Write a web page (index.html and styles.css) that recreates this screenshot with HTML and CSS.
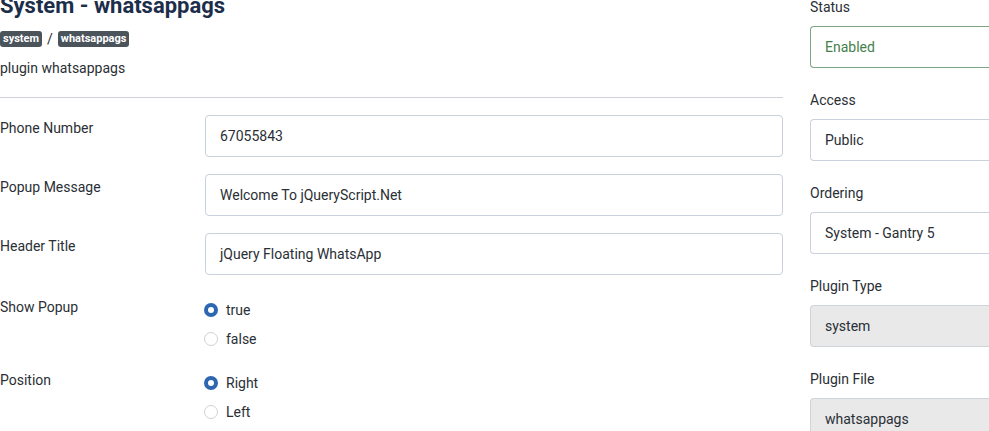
FILE: index.html
```html
<!DOCTYPE html>
<html lang="en">
<head>
<meta charset="utf-8">
<title>System - whatsappags</title>
<link rel="stylesheet" href="styles.css">
</head>
<body>
<div class="page">
  <main class="main">
    <h1 class="title">System - whatsappags</h1>
    <div class="badges">
      <span class="badge">system</span>
      <span class="sep">/</span>
      <span class="badge">whatsappags</span>
    </div>
    <p class="desc">plugin whatsappags</p>
    <hr class="rule">
    <div class="rows">
      <div class="row">
        <div class="label">Phone Number</div>
        <div class="input">67055843</div>
      </div>
      <div class="row">
        <div class="label">Popup Message</div>
        <div class="input">Welcome To jQueryScript.Net</div>
      </div>
      <div class="row">
        <div class="label">Header Title</div>
        <div class="input">jQuery Floating WhatsApp</div>
      </div>
      <div class="row row-radio">
        <div class="label">Show Popup</div>
        <div class="radios">
          <div class="radio"><span class="dot checked"></span>true</div>
          <div class="radio"><span class="dot"></span>false</div>
        </div>
      </div>
      <div class="row row-radio row-last">
        <div class="label">Position</div>
        <div class="radios">
          <div class="radio"><span class="dot checked"></span>Right</div>
          <div class="radio"><span class="dot"></span>Left</div>
        </div>
      </div>
    </div>
  </main>
  <aside class="side">
    <div class="group">
      <div class="side-label">Status</div>
      <div class="input success">Enabled</div>
    </div>
    <div class="group">
      <div class="side-label">Access</div>
      <div class="input">Public</div>
    </div>
    <div class="group">
      <div class="side-label">Ordering</div>
      <div class="input">System - Gantry 5</div>
    </div>
    <div class="group">
      <div class="side-label">Plugin Type</div>
      <div class="input disabled">system</div>
    </div>
    <div class="group">
      <div class="side-label">Plugin File</div>
      <div class="input disabled">whatsappags</div>
    </div>
  </aside>
</div>
</body>
</html>
```
FILE: styles.css
```css
html, body {
  margin: 0;
  padding: 0;
  background: #ffffff;
  overflow: hidden;
}
body {
  font-family: Roboto, "Liberation Sans", sans-serif;
  font-size: 14px;
  color: #2a2f35;
}
.page {
  display: flex;
  gap: 27px;
  width: 1040px;
}
.main {
  width: 783px;
  flex: none;
}
.title {
  margin: -7px 0 0;
  font-size: 22px;
  line-height: 26px;
  font-weight: 700;
  color: #1c2e4a;
}
.badges {
  margin-top: 11px;
  display: flex;
  align-items: center;
  gap: 5px;
  height: 17px;
}
.badge {
  background: #4b535b;
  color: #ffffff;
  font-size: 11px;
  font-weight: 700;
  line-height: 16px;
  padding: 0 3px;
  border-radius: 3px;
}
.sep {
  color: #2a2f35;
  font-size: 14px;
}
.desc {
  margin: 11px 0 0;
  line-height: 20px;
}
.rule {
  margin: 19px 0 0;
  border: 0;
  border-top: 1px solid #cfd2d6;
  height: 0;
}
.rows {
  margin-top: 17px;
  display: flex;
  flex-direction: column;
}
.row {
  display: flex;
  margin-bottom: 17px;
}
.row-radio {
  margin-bottom: 12px;
}
.label {
  width: 205px;
  flex: none;
  line-height: 20px;
  padding-top: 3px;
}
.row-radio .label {
  padding-top: 5px;
}
.input {
  flex: 1;
  height: 42px;
  box-sizing: border-box;
  border: 1px solid #c9d1dc;
  border-radius: 4px;
  padding: 0 14px;
  display: flex;
  align-items: center;
  color: #2a2f35;
  background: #ffffff;
}
.radios {
  display: flex;
  flex-direction: column;
  padding-top: 3px;
}
.radio {
  height: 29px;
  display: flex;
  align-items: center;
  gap: 8px;
}
.dot {
  width: 14px;
  height: 14px;
  box-sizing: border-box;
  border: 1px solid #cfd2d5;
  border-radius: 50%;
  background: #ffffff;
  margin-left: -1px;
}
.dot.checked {
  border: 4px solid #2d67b2;
}
.side {
  width: 220px;
  flex: none;
  margin-top: -3px;
  display: flex;
  flex-direction: column;
}
.group {
  display: flex;
  flex-direction: column;
  margin-bottom: 22px;
}
.side-label {
  line-height: 20px;
  margin-bottom: 9px;
}
.side .input {
  flex: none;
  border-radius: 4px 0 0 4px;
  border-right: 0;
}
.input.success {
  border-color: #7ca482;
  color: #457f4c;
}
.input.disabled {
  background: #e9e9ea;
  border-color: #cfd4da;
}
```
